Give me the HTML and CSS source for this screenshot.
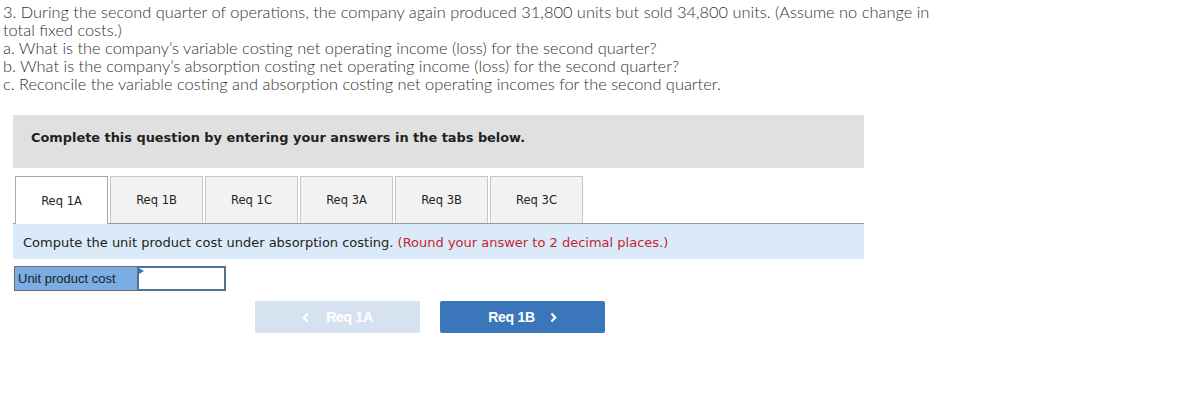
FILE: index.html
```html
<!DOCTYPE html>
<html>
<head>
<meta charset="utf-8">
<link rel="stylesheet" href="styles.css">
</head>
<body>
<div class="question">
  <p>3. During the second quarter of operations, the company again produced 31,800 units but sold 34,800 units. (Assume no change in total fixed costs.)</p>
  <p>a. What is the company’s variable costing net operating income (loss) for the second quarter?</p>
  <p>b. What is the company’s absorption costing net operating income (loss) for the second quarter?</p>
  <p>c. Reconcile the variable costing and absorption costing net operating incomes for the second quarter.</p>
</div>

<div class="widget">
  <div class="instructions">Complete this question by entering your answers in the tabs below.</div>
  <div class="tabbar">
    <div class="tab active">Req 1A</div>
    <div class="tab">Req 1B</div>
    <div class="tab">Req 1C</div>
    <div class="tab">Req 3A</div>
    <div class="tab">Req 3B</div>
    <div class="tab">Req 3C</div>
  </div>
  <div class="panel">Compute the unit product cost under absorption costing. <span class="hint">(Round your answer to 2 decimal places.)</span></div>
  <div class="answer-row">
    <div class="label">Unit product cost</div>
    <div class="input"><span class="flag"></span></div>
  </div>
  <div class="nav">
    <div class="btn prev"><svg class="chev left" width="7" height="11" viewBox="0 0 7 11"><path d="M5.5 1.5 L1.8 5.5 L5.5 9.5" fill="none" stroke="#fff" stroke-width="2.2"/></svg>Req 1A</div>
    <div class="btn next">Req 1B<svg class="chev right" width="7" height="11" viewBox="0 0 7 11"><path d="M1.5 1.5 L5.2 5.5 L1.5 9.5" fill="none" stroke="#fff" stroke-width="2.2"/></svg></div>
  </div>
</div>
</body>
</html>
```
FILE: styles.css
```css
html, body { margin: 0; padding: 0; background: #fff; }
body { width: 1203px; height: 415px; overflow: hidden; }

.question {
  padding: 3px 0 0 3px;
  width: 935px;
  font-family: "Lato", "Open Sans", sans-serif;
  font-weight: 300;
  font-size: 16.4px;
  line-height: 18px;
  color: #333;
}
.question p { margin: 0; }

.widget {
  margin: 22px 0 0 13px;
  width: 851px;
}
.instructions {
  background: #e0e0e0;
  height: 53px;
  box-sizing: border-box;
  padding: 15px 0 0 18px;
  font-family: "DejaVu Sans", Verdana, sans-serif;
  font-weight: bold;
  font-size: 12.9px;
  color: #222;
}
.tabbar {
  margin-top: 8px;
  padding-left: 2px;
  display: flex;
  gap: 2px;
  border-bottom: 1px solid #9a9a9a;
  height: 47px;
}
.tab {
  width: 93px;
  height: 47px;
  box-sizing: border-box;
  border: 1px solid #c6c6c6;
  border-bottom: none;
  background: #f2f2f2;
  display: flex;
  align-items: center;
  justify-content: center;
  font-family: "DejaVu Sans", Tahoma, sans-serif;
  font-size: 11.5px;
  color: #222;
}
.tab.active {
  background: #fff;
  border-color: #a8a8a8;
  height: 48px;
}
.panel {
  background: #daeaf8;
  height: 35px;
  box-sizing: border-box;
  padding: 11px 0 0 10px;
  font-family: "DejaVu Sans", Verdana, sans-serif;
  font-size: 13px;
  color: #222;
}
.hint { color: #c4262e; }

.answer-row {
  margin-top: 7px;
  margin-left: 1px;
  display: flex;
  height: 25px;
}
.label {
  width: 123px;
  box-sizing: border-box;
  background: #79ade4;
  border: 1px solid #6b6b6b;
  border-right: none;
  font-family: "Liberation Sans", Arial, sans-serif;
  font-size: 13px;
  color: #222;
  padding: 4px 0 0 3px;
}
.input {
  position: relative;
  width: 89px;
  box-sizing: border-box;
  background: #fff;
  border: 1px solid #6b6b6b;
  box-shadow: inset 0 0 0 1px #3a76b9;
}
.flag {
  position: absolute;
  left: 1px;
  top: 1px;
  width: 0;
  height: 0;
  border-top: 3px solid transparent;
  border-bottom: 3px solid transparent;
  border-left: 5px solid #3a76b9;
}

.nav {
  margin-top: 10px;
  padding-left: 242px;
  display: flex;
  gap: 20px;
}
.btn {
  width: 165px;
  height: 32px;
  border-radius: 2px;
  display: flex;
  align-items: center;
  justify-content: center;
  font-family: "Liberation Sans", Arial, sans-serif;
  font-weight: bold;
  font-size: 14px;
  letter-spacing: -0.3px;
  color: #fff;
}
.btn.prev { background: #d6e2f0; }
.btn.next { background: #3a76b9; }
.chev.left { margin-right: 17px; }
.chev.right { margin-left: 15px; }
```
